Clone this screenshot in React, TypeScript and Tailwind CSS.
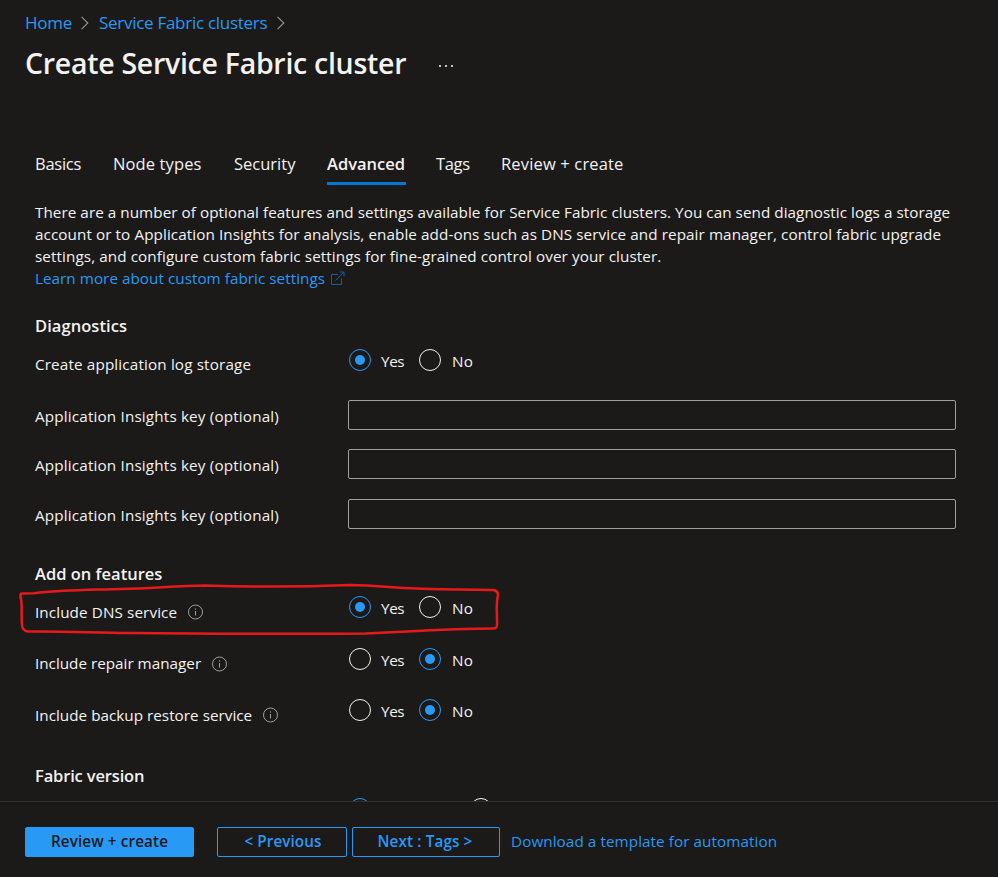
import type { ReactNode } from "react";

function Chevron() {
  return (
    <svg className="h-[14px] w-[9px] shrink-0" viewBox="0 0 9 14" fill="none" stroke="#979593" strokeWidth="1.1">
      <path d="M.6 0.8 6.8 7 .6 13.2" />
    </svg>
  );
}

function InfoIcon() {
  return (
    <svg className="-ml-[0.5px] h-[16px] w-[16px] shrink-0" viewBox="0 0 16 16" fill="none" stroke="#a19f9d" strokeWidth="1">
      <circle cx="7.5" cy="8" r="7" />
      <path d="M7.5 7v4.5M7.5 4.4v1.2" />
    </svg>
  );
}

function ExternalIcon() {
  return (
    <svg className="-mt-px h-[14px] w-[14px] shrink-0" viewBox="0 0 14 14" fill="none" stroke="#0f5fae" strokeWidth="1">
      <path d="M7 3.500H.5v10h10V7.500" />
      <path d="M4.500 9.500 12.500 1.500M8.500 1H13v4.500" />
    </svg>
  );
}

function Radio({ checked = false }: { checked?: boolean }) {
  return (
    <span
      className={
        checked
          ? "flex h-[22px] w-[22px] shrink-0 items-center justify-center rounded-full border border-[#2899f5]"
          : "flex h-[22px] w-[22px] shrink-0 rounded-full border border-[#f3f2f1]"
      }
    >
      {checked && <span className="h-[10px] w-[10px] rounded-full bg-[#2899f5]" />}
    </span>
  );
}

function YesNo({ value }: { value: "yes" | "no" }) {
  return (
    <div className="flex h-[22px] items-center pl-px">
      <Radio checked={value === "yes"} />
      <span className="ml-[10px] w-[38px] pt-[2px] leading-[22px] tracking-[-0.4px]">Yes</span>
      <Radio checked={value === "no"} />
      <span className="ml-[11px] pt-[2px] leading-[22px] tracking-[0.3px]">No</span>
    </div>
  );
}

function Row({ label, className, children }: { label: ReactNode; className: string; children: ReactNode }) {
  return (
    <div className={`flex items-start ${className}`}>
      <div className="flex h-full w-[313px] shrink-0 items-center">{label}</div>
      {children}
    </div>
  );
}

function KeyRow({ className }: { className: string }) {
  return (
    <Row
      className={`h-[30px] ${className}`}
      label={<span className="pt-[2px] tracking-[0.16px]">Application Insights key (optional)</span>}
    >
      <input className="h-[30px] w-[608px] rounded-[2px] border border-[#a19f9d] bg-transparent px-2 outline-none" />
    </Row>
  );
}

export default function App() {
  return (
    <div className="relative flex h-[877px] w-[998px] flex-col overflow-hidden bg-[#1b1a19] font-['Open_Sans','Noto_Sans',sans-serif] text-[15.25px] text-[#f3f2f1]">
      <header className="px-[25px] pt-[12px]">
        <nav className="flex h-[22px] items-center text-[17px] text-[#2899f5]">
          <span className="w-[56px] tracking-[-0.27px]">Home</span>
          <Chevron />
          <span className="ml-[9px] w-[178px] tracking-[-0.28px] whitespace-nowrap">Service Fabric clusters</span>
          <Chevron />
        </nav>
        <div className="mt-[11px] flex h-[36px] items-center">
          <h1 className="w-[414px] pt-px text-[28.5px] font-semibold tracking-[-0.28px] whitespace-nowrap">
            Create Service Fabric cluster
          </h1>
          <span className="flex gap-[4px] pt-[5px]">
            <i className="h-[2px] w-[2px] bg-[#c8c6c4]" />
            <i className="h-[2px] w-[2px] bg-[#c8c6c4]" />
            <i className="h-[2px] w-[2px] bg-[#c8c6c4]" />
          </span>
        </div>
      </header>

      <main className="h-[720px] shrink-0 overflow-hidden pt-[60px] pl-[35px]">
        <nav className="flex h-[44px] text-[16.5px] leading-[46px] whitespace-nowrap">
          <span className="w-[78px] tracking-[-0.27px]">Basics</span>
          <span className="w-[121px] tracking-[0.12px]">Node types</span>
          <span className="w-[93px] tracking-[0px]">Security</span>
          <span className="mr-[30px] h-[44px] w-[79px] border-b-[3px] border-[#0078d4] font-semibold">Advanced</span>
          <span className="w-[65px] tracking-[-0.35px]">Tags</span>
          <span className="tracking-[0.16px]">Review + create</span>
        </nav>

        <div className="mt-[16px] leading-[22px] whitespace-nowrap">
          <p className="tracking-[0.048px]">
            There are a number of optional features and settings available for Service Fabric clusters. You can send
            diagnostic logs a storage
          </p>
          <p className="tracking-[0.08px]">
            account or to Application Insights for analysis, enable add-ons such as DNS service and repair manager,
            control fabric upgrade
          </p>
          <p className="tracking-[0.085px]">
            settings, and configure custom fabric settings for fine-grained control over your cluster.
          </p>
          <p className="flex items-center text-[#2899f5]">
            <span className="w-[296px] tracking-[0.035px]">Learn more about custom fabric settings</span>
            <ExternalIcon />
          </p>
        </div>

        <h2 className="mt-[25px] text-[16.5px] leading-[24px] font-semibold tracking-[0.06px]">Diagnostics</h2>
        <Row className="mt-[11px] h-[30px]" label={<span className="tracking-[0.14px]">Create application log storage</span>}>
          <YesNo value="yes" />
        </Row>
        <KeyRow className="mt-[21px]" />
        <KeyRow className="mt-[19px]" />
        <KeyRow className="mt-[20px]" />

        <h2 className="mt-[33px] text-[16.5px] leading-[24px] font-semibold">Add on features</h2>
        <Row
          className="mt-[10px] h-[32px]"
          label={
            <>
              <span className="w-[153px] tracking-[0.1px]">Include DNS service</span>
              <InfoIcon />
            </>
          }
        >
          <YesNo value="yes" />
        </Row>
        <Row
          className="mt-[20px] h-[31px]"
          label={
            <>
              <span className="w-[177px] tracking-[0px]">Include repair manager</span>
              <InfoIcon />
            </>
          }
        >
          <YesNo value="no" />
        </Row>
        <Row
          className="mt-[20px] h-[32px]"
          label={
            <>
              <span className="w-[228px] tracking-[0.02px]">Include backup restore service</span>
              <InfoIcon />
            </>
          }
        >
          <YesNo value="no" />
        </Row>

        <h2 className="mt-[33px] text-[16.5px] leading-[24px] font-semibold tracking-[-0.15px]">Fabric version</h2>
        <div className="mt-[10px] flex gap-[99px] pl-[314px]">
          <Radio checked />
          <Radio />
        </div>
      </main>

      <footer className="flex h-[76px] shrink-0 items-start border-t border-[#323130] pt-[25px] pl-[25px] leading-[26px] whitespace-nowrap">
        <button className="h-[30px] w-[169px] rounded-[2px] border border-[#2899f5] bg-[#2899f5] pb-[2px] font-semibold tracking-[0.12px] text-[#1b1a19]">
          Review + create
        </button>
        <button className="ml-[23px] h-[30px] w-[130px] rounded-[2px] border border-[#2899f5] pb-[2px] pl-[2px] font-semibold tracking-[0.08px] text-[#2899f5]">
          &lt; Previous
        </button>
        <button className="ml-[5px] h-[30px] w-[148px] rounded-[2px] border border-[#2899f5] pr-[2px] pb-[2px] font-semibold tracking-[0.13px] text-[#2899f5]">
          Next : Tags &gt;
        </button>
        <a className="ml-[11px] pt-px tracking-[0.07px] text-[#2899f5]">Download a template for automation</a>
      </footer>

      <svg
        className="pointer-events-none absolute top-[578px] left-[10px] h-[64px] w-[498px]"
        viewBox="10 578 498 64"
        fill="none"
        stroke="#e8191c"
        strokeWidth="2.5"
        strokeLinecap="round"
        strokeLinejoin="round"
      >
        <path d="M20.500 598.500 V595 Q20.500 593.500 22 593.500 L34 593.200 C60 590 90 590 120 589 C150 588.500 175 586 205 585.500 C235 586.500 300 587 350 585 C380 585.500 400 588.500 440 589.300 L493 590 Q498 590.500 498 595 C495.500 606 497.500 616 497 625 Q497 628.500 493 628.500 C450 628.500 410 631.500 365 633.500 C290 634 200 634 130 633 C90 632.500 60 631 28 631.500 Q22.500 631 22 625 C21 615 22.500 607 21 598" />
      </svg>
    </div>
  );
}
